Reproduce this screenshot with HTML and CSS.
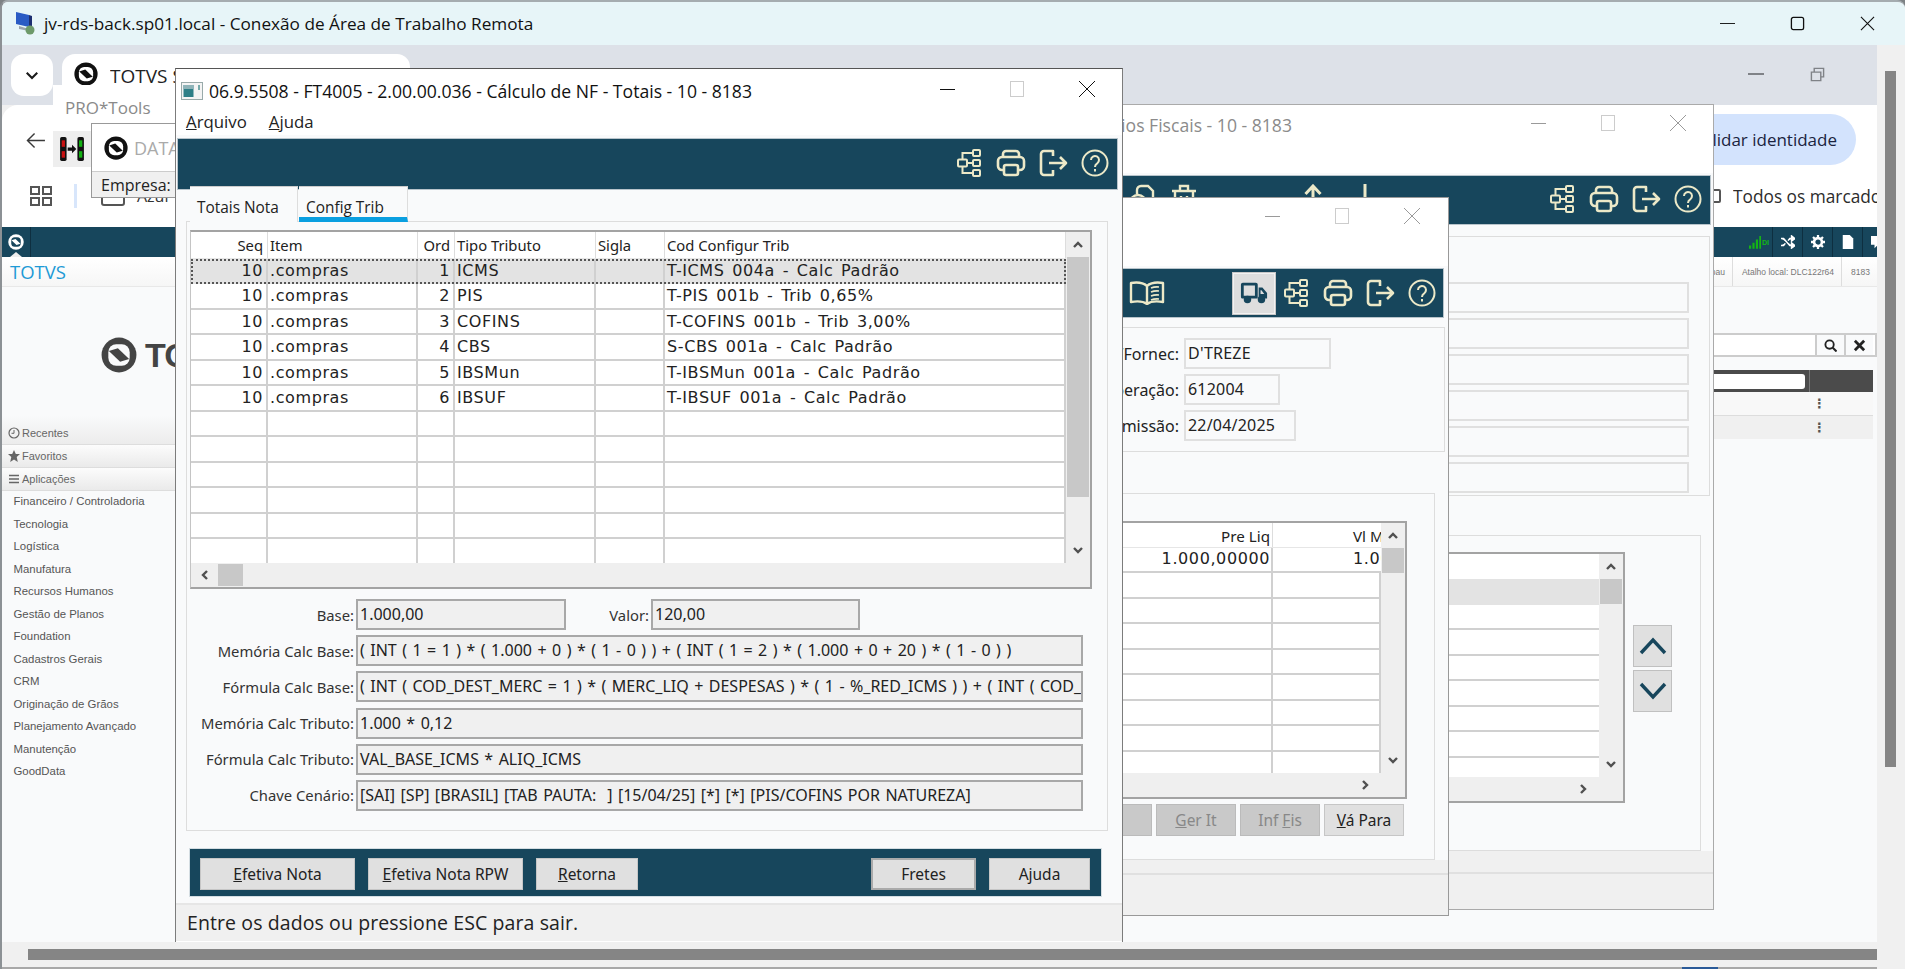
FILE: index.html
```html
<!DOCTYPE html>
<html lang="pt-BR">
<head>
<meta charset="utf-8">
<title>jv-rds-back.sp01.local - Conexão de Área de Trabalho Remota</title>
<link rel="stylesheet" href="styles.css">
</head>
<body>
<svg class="defs" width="0" height="0" aria-hidden="true">
  <symbol id="i-hier" viewBox="0 0 24 28"><g fill="none" stroke="currentColor" stroke-width="2"><rect x="1" y="10.500" width="9" height="7" rx="1"/><rect x="16" y="1" width="7" height="6" rx="1"/><rect x="16" y="11" width="7" height="6" rx="1"/><rect x="16" y="21" width="7" height="6" rx="1"/><path d="M10 14H16M5.500 10.500V4H16M5.500 17.500V24H16"/></g></symbol>
  <symbol id="i-print" viewBox="0 0 30 28"><g fill="none" stroke="currentColor" stroke-width="2.600"><path d="M7 8V5a3 3 0 0 1 3-3H20a3 3 0 0 1 3 3V8"/><path d="M8 21H6a4 4 0 0 1-4-4V12a4 4 0 0 1 4-4H24a4 4 0 0 1 4 4V17a4 4 0 0 1-4 4H22"/><rect x="8" y="16" width="14" height="10" rx="2"/></g></symbol>
  <symbol id="i-exit" viewBox="0 0 30 28"><g fill="none" stroke="currentColor" stroke-width="2.600" stroke-linejoin="round"><path d="M14 7V2H5a3 3 0 0 0-3 3V23a3 3 0 0 0 3 3H14V21"/><path d="M10 14H27M21 8l6 6-6 6"/></g></symbol>
  <symbol id="i-help" viewBox="0 0 28 28"><g fill="none" stroke="currentColor" stroke-width="2"><circle cx="14" cy="14" r="12.500"/><path d="M10 11a4 4 0 1 1 6.200 3.300c-1.600 1-2.200 1.700-2.200 3.700"/><path d="M14 20v2.500"/></g></symbol>
  <symbol id="i-truck" viewBox="0 0 30 24"><g fill="currentColor"><path d="M3 1H17a2 2 0 0 1 2 2V18H2a2 2 0 0 1-1-2V3a2 2 0 0 1 2-2Z M4 4V15H16V4Z" fill-rule="evenodd"/><path d="M20 6h4l5 6v6H20Z M22 9v4h4l-3-4Z" fill-rule="evenodd"/><circle cx="8" cy="19" r="4"/><circle cx="23" cy="19" r="4"/></g></symbol>
  <symbol id="i-book" viewBox="0 0 36 24"><g fill="none" stroke="currentColor" stroke-width="2.400" stroke-linejoin="round"><path d="M18 5C14 1.500 8 1 2 2V21c6-1 12-1 16 2 4-3 10-3 16-2V2C28 1 22 1.500 18 5ZM18 5V23"/><path stroke-width="1.600" d="M22 7c2.500-1 5-1.300 8-1M22 11c2.500-1 5-1.300 8-1M22 15c2.500-1 5-1.300 8-1M22 19c2.500-1 5-1.300 8-1"/></g></symbol>
  <symbol id="i-copy" viewBox="0 0 26 28"><g fill="none" stroke="currentColor" stroke-width="2.400"><circle cx="9" cy="19" r="8"/><path d="M8 10V6a4 4 0 0 1 4-4h7l5 5v10a3 3 0 0 1-3 3h-4"/></g></symbol>
  <symbol id="i-trash" viewBox="0 0 26 28"><g fill="none" stroke="currentColor" stroke-width="2.400"><path d="M1 7H25M9 6V2H17V6M4 8V25a2 2 0 0 0 2 2H20a2 2 0 0 0 2-2V8M10 12V22M16 12V22"/></g></symbol>
  <symbol id="i-logo" viewBox="0 0 32 32"><circle cx="16" cy="16" r="15.500" fill="currentColor"/><rect x="6.500" y="6.500" width="19" height="19" rx="7" fill="var(--logo-hole,#fff)"/><path d="M7 12.500L15 10 25 19.500 17 22Z" fill="currentColor"/></symbol>
  <symbol id="i-chev" viewBox="0 0 12 12"><path d="M2 8L6 4l4 4" fill="none" stroke="currentColor" stroke-width="2.400"/></symbol>
</svg>

<div class="desktop">
  <div class="frame">
    <header class="rdp-title">
      <svg class="rdp-icon" viewBox="0 0 22 24"><path d="M2 1l13 3v12L2 13Z" fill="#2a5bc4"/><path d="M15 4l3 1v11l-3 1Z" fill="#1c2e70"/><path d="M5 15l10 3v2L5 18Z" fill="#9aa3ad"/><circle cx="16" cy="19" r="4.500" fill="#6d9a6a"/></svg>
      <span class="rdp-text">jv-rds-back.sp01.local - Conexão de Área de Trabalho Remota</span>
      <div class="rdp-controls">
        <svg viewBox="0 0 16 16"><path d="M0 8H16" stroke="#111" stroke-width="1"/></svg>
        <svg viewBox="0 0 16 16"><rect x="1.500" y="1.500" width="13" height="13" rx="2" fill="none" stroke="#111" stroke-width="1.400"/></svg>
        <svg viewBox="0 0 16 16"><path d="M1 1L15 15M15 1L1 15" stroke="#111" stroke-width="1.200"/></svg>
      </div>
    </header>

    <div class="tabstrip">
      <div class="dropdown"><svg viewBox="0 0 12 12"><path d="M1.500 4L6 8.500 10.500 4" fill="none" stroke="#1a1a1a" stroke-width="1.800"/></svg></div>
      <div class="browser-tab">
        <svg class="tab-logo"><use href="#i-logo"/></svg>
        <span>TOTVS Smartclient</span>
      </div>
      <div class="strip-controls">
        <span class="strip-min"></span>
        <svg viewBox="0 0 16 16"><path d="M1.500 5.500h10v9h-10ZM4.500 5V1.500h10v9H12" fill="none" stroke="#7f8287" stroke-width="1.500"/></svg>
      </div>
    </div>

    <main class="page">
      <div class="tool-a">
        <svg class="back-arrow" viewBox="0 0 20 18"><path d="M20 9H2M9 1.500L1.500 9 9 16.500" fill="none" stroke="#3a3a3a" stroke-width="1.500"/></svg>
        <div class="pill">Validar identidade</div>
      </div>
      <div class="tool-b">
        <svg class="apps" viewBox="0 0 22 20"><path d="M1 1h8v7H1ZM13 1h8v7h-8ZM1 12h8v7H1ZM13 12h8v7h-8Z" fill="none" stroke="#555" stroke-width="2"/></svg>
        <span class="vbar"></span>
        <span class="azul-box"></span>
        <span class="azul">Azul</span>
        <span class="checkbox"></span>
        <span class="todos">Todos os marcados</span>
      </div>
      <div class="teal-bar">
        <div class="teal-logo">
          <svg><use href="#i-logo"/></svg>
          <span class="notch"></span>
        </div>
        <div class="teal-right">
          <div class="t-cell signal">
            <svg viewBox="0 0 14 16"><path d="M0 12h2.500v4H0ZM4 9h2.500v7H4ZM8 5h2.500v11H8ZM12 1h2v15h-2Z" fill="#14b514"/></svg>
            <span>DI</span>
          </div>
          <div class="t-cell"><svg viewBox="0 0 16 14"><path d="M0 3h3l7 8h3M0 11h3l2-2.500M8 5.500L10 3h3M12 0l4 3-4 3ZM12 8l4 3-4 3Z" fill="#fff" stroke="#fff" stroke-width="1.600"/></svg></div>
          <div class="t-cell"><svg viewBox="0 0 16 16"><circle cx="8" cy="8" r="4.500" fill="none" stroke="#fff" stroke-width="3"/><path d="M8 0v3M8 13v3M0 8h3M13 8h3M2.300 2.300l2 2M11.700 11.700l2 2M2.300 13.700l2-2M11.700 4.300l2-2" stroke="#fff" stroke-width="2.600"/></svg></div>
          <div class="t-cell"><svg viewBox="0 0 14 16"><path d="M1 0h8l4 4v12H1Z" fill="#fff"/></svg></div>
          <div class="t-cell t-last"><svg viewBox="0 0 16 16"><path d="M0 1h16v10H8l-4 4v-4H0Z" fill="#fff"/></svg></div>
        </div>
      </div>
      <div class="crumb">
        <span class="crumb-title">TOTVS</span>
        <div class="crumb-right">
          <span class="c-item c-narrow">Matão - Itambau</span>
          <span class="c-item">Atalho local: DLC122r64</span>
          <span class="c-item">8183</span>
        </div>
      </div>
      <div class="content">
        <aside class="sidebar">
          <div class="brand">
            <svg><use href="#i-logo"/></svg>
            <span>TOTVS</span>
          </div>
          <div class="acc acc-first">
            <svg viewBox="0 0 12 12"><circle cx="6" cy="6" r="5" fill="none" stroke="#666" stroke-width="1.200"/><path d="M6 3v3.300H3.500" fill="none" stroke="#666"/></svg>
            <span>Recentes</span>
          </div>
          <div class="acc">
            <svg viewBox="0 0 12 12"><path d="M6 0l1.800 4H12L8.700 7l1.100 5L6 9.400 2.200 12l1.100-5L0 4h4.200Z" fill="#666"/></svg>
            <span>Favoritos</span>
          </div>
          <div class="acc">
            <svg viewBox="0 0 12 12"><path d="M1 2.500h10M1 6h10M1 9.500h10" stroke="#666" stroke-width="1.400"/></svg>
            <span>Aplicações</span>
          </div>
          <nav class="menu">
            <a>Financeiro / Controladoria</a>
            <a>Tecnologia</a>
            <a>Logística</a>
            <a>Manufatura</a>
            <a>Recursos Humanos</a>
            <a>Gestão de Planos</a>
            <a>Foundation</a>
            <a>Cadastros Gerais</a>
            <a>CRM</a>
            <a>Originação de Grãos</a>
            <a>Planejamento Avançado</a>
            <a>Manutenção</a>
            <a>GoodData</a>
          </nav>
        </aside>
        <section class="rightpane">
          <div class="searchbox">
            <div class="s-input"></div>
            <button class="s-btn"><svg viewBox="0 0 14 14"><circle cx="6" cy="6" r="4.500" fill="none" stroke="#222" stroke-width="2"/><path d="M9.500 9.500L13.500 13.500" stroke="#222" stroke-width="2.200"/></svg></button>
            <button class="s-btn"><svg viewBox="0 0 14 14"><path d="M2 2L12 12M12 2L2 12" stroke="#222" stroke-width="3"/></svg></button>
          </div>
          <div class="dark-head"><span class="d-pill"></span><span class="d-rest"></span></div>
          <div class="lst lst-a"><span class="kebab">⋮</span></div>
          <div class="lst lst-b"><span class="kebab">⋮</span></div>
        </section>
      </div>
    </main>

    <div class="v-scroll"><div class="v-thumb"></div></div>
    <div class="h-scroll"><div class="h-thumb"></div></div>
    <div class="frame-bottom"><span></span></div>
  </div>

  <!-- Janelas flutuantes da aplicação -->
  <div class="protools">PRO*Tools</div>

  <div class="datawin">
    <div class="dw-head">
      <svg class="dw-logo"><use href="#i-logo"/></svg>
      <span>DATASUL</span>
    </div>
    <div class="dw-row">Empresa:</div>
  </div>
  <div class="flag-icon">
    <svg viewBox="0 0 24 24">
      <rect x="1" y="1" width="6" height="22" rx="1.500" fill="#111"/><rect x="2.500" y="4" width="3" height="6" fill="#c91212"/><rect x="2.500" y="14" width="3" height="6" fill="#c91212"/>
      <rect x="17" y="1" width="6" height="22" rx="1.500" fill="#111"/><rect x="18.500" y="4" width="3" height="6" fill="#12b212"/><rect x="18.500" y="14" width="3" height="6" fill="#12b212"/>
      <path d="M8 10.500h4V8l4 4-4 4v-2.500H8Z" fill="#111"/>
    </svg>
  </div>

  <!-- Janela de trás -->
  <div class="win win-back">
    <div class="w-title w-title-back">
      <span class="w-text w-text-back">Benefícios Fiscais - 10 - 8183</span>
      <div class="w-controls controls-back">
        <i class="c-min"></i><i class="c-box"></i><svg viewBox="0 0 16 16"><path d="M0 0L16 16M16 0L0 16" stroke="currentColor" stroke-width="1"/></svg>
      </div>
    </div>
    <div class="toolbar back-toolbar">
      <svg class="ti ti-copy"><use href="#i-copy"/></svg>
      <svg class="ti ti-trash"><use href="#i-trash"/></svg>
      <svg class="ti-arrow ti-up" viewBox="0 0 18 26"><path d="M9 26V3M1.500 10L9 2l7.500 8" fill="none" stroke="currentColor" stroke-width="3"/></svg>
      <svg class="ti-arrow ti-down" viewBox="0 0 18 26"><path d="M9 0V23M1.500 16L9 24l7.500-8" fill="none" stroke="currentColor" stroke-width="3"/></svg>
      <span class="spacer"></span>
      <svg class="ti ti-h"><use href="#i-hier"/></svg>
      <svg class="ti ti-p"><use href="#i-print"/></svg>
      <svg class="ti ti-e"><use href="#i-exit"/></svg>
      <svg class="ti ti-q"><use href="#i-help"/></svg>
    </div>
    <div class="back-panel">
      <div class="blank-field"></div><div class="blank-field"></div><div class="blank-field"></div>
      <div class="blank-field"></div><div class="blank-field"></div><div class="blank-field"></div>
    </div>
    <div class="back-panel2">
      <div class="grid back-grid">
        <div class="g-main">
          <div class="g-rows">
            <div class="g-head g-plain"></div>
            <div class="g-row g-one g-sel-flat"></div>
            <div class="g-row g-one"></div><div class="g-row g-one"></div><div class="g-row g-one"></div>
            <div class="g-row g-one"></div><div class="g-row g-one"></div><div class="g-row g-one"></div><div class="g-row g-one"></div><div class="g-row g-one"></div>
          </div>
          <div class="g-v">
            <svg class="chev"><use href="#i-chev"/></svg>
            <div class="g-vthumb thumb-25"></div>
            <span class="spacer"></span>
            <svg class="chev chev-down"><use href="#i-chev"/></svg>
          </div>
        </div>
        <div class="g-h g-h-end"><svg class="chev chev-right"><use href="#i-chev"/></svg></div>
      </div>
      <div class="updown">
        <button class="ud-btn"><svg viewBox="0 0 28 18"><path d="M2 16L14 3l12 13" fill="none" stroke="#17465c" stroke-width="3.400"/></svg></button>
        <button class="ud-btn"><svg viewBox="0 0 28 18"><path d="M2 2l12 13L26 2" fill="none" stroke="#17465c" stroke-width="3.400"/></svg></button>
      </div>
    </div>
    <div class="st-band band-back"></div>
    <div class="st-foot foot-back"></div>
  </div>

  <!-- Janela do meio -->
  <div class="win win-mid">
    <div class="w-title w-title-mid">
      <div class="w-controls controls-back">
        <i class="c-min"></i><i class="c-box"></i><svg viewBox="0 0 16 16"><path d="M0 0L16 16M16 0L0 16" stroke="currentColor" stroke-width="1"/></svg>
      </div>
    </div>
    <div class="toolbar mid-toolbar">
      <svg class="ti ti-book"><use href="#i-book"/></svg>
      <span class="spacer"></span>
      <div class="truck-btn"><svg><use href="#i-truck"/></svg></div>
      <svg class="ti ti-h ti-h-mid"><use href="#i-hier"/></svg>
      <svg class="ti ti-p"><use href="#i-print"/></svg>
      <svg class="ti ti-e"><use href="#i-exit"/></svg>
      <svg class="ti ti-q"><use href="#i-help"/></svg>
    </div>
    <div class="mid-panel">
      <div class="mf"><label>Nome/Fornec:</label><span class="mf-val mf-a">D'TREZE</span></div>
      <div class="mf"><label>Operação:</label><span class="mf-val mf-b">612004</span></div>
      <div class="mf"><label>Emissão:</label><span class="mf-val mf-c">22/04/2025</span></div>
    </div>
    <div class="mid-panel2">
      <div class="grid mid-grid">
        <div class="g-main">
          <div class="g-rows">
            <div class="g-head mid-cols"><span class="c-r">Pre Liq</span><span class="c-clip">Vl Merc</span></div>
            <div class="g-row mid-cols"><span class="c-r data">1.000,00000</span><span class="c-clip data">1.000,00</span></div>
            <div class="g-row mid-cols"><span></span><span></span></div><div class="g-row mid-cols"><span></span><span></span></div>
            <div class="g-row mid-cols"><span></span><span></span></div><div class="g-row mid-cols"><span></span><span></span></div>
            <div class="g-row mid-cols"><span></span><span></span></div><div class="g-row mid-cols"><span></span><span></span></div>
            <div class="g-row mid-cols"><span></span><span></span></div><div class="g-row mid-cols"><span></span><span></span></div>
          </div>
          <div class="g-v">
            <svg class="chev"><use href="#i-chev"/></svg>
            <div class="g-vthumb thumb-25"></div>
            <span class="spacer"></span>
            <svg class="chev chev-down"><use href="#i-chev"/></svg>
          </div>
        </div>
        <div class="g-h g-h-end mid-h"><svg class="chev chev-right"><use href="#i-chev"/></svg></div>
      </div>
      <div class="mid-btns">
        <button class="dlg-btn off btn-left">Filtrar</button>
        <button class="dlg-btn off"><u>G</u>er It</button>
        <button class="dlg-btn off">Inf <u>F</u>is</button>
        <button class="dlg-btn"><u>V</u>á Para</button>
      </div>
    </div>
    <div class="st-band band-mid"></div>
    <div class="st-foot foot-mid"></div>
  </div>

  <!-- Janela principal -->
  <div class="win win-main">
    <div class="w-title w-title-main">
      <svg class="win-ico" viewBox="0 0 22 18"><rect x=".5" y=".5" width="21" height="17" fill="#f4f4f4" stroke="#9aa"/><rect x="2.500" y="3" width="10" height="12" fill="#2e7f87"/><rect x="2.500" y="3" width="10" height="4" fill="#8fb3b8"/><rect x="17" y="3" width="2" height="5" fill="#7aa"/></svg>
      <span class="w-text">06.9.5508 - FT4005 - 2.00.00.036 - Cálculo de NF - Totais - 10 - 8183</span>
      <div class="w-controls controls-main">
        <i class="c-min"></i><i class="c-box"></i><svg viewBox="0 0 16 16"><path d="M0 0L16 16M16 0L0 16" stroke="currentColor" stroke-width="1"/></svg>
      </div>
    </div>
    <div class="menubar"><span><u>A</u>rquivo</span><span><u>A</u>juda</span></div>
    <div class="toolbar main-toolbar">
      <span class="spacer"></span>
      <svg class="ti ti-h"><use href="#i-hier"/></svg>
      <svg class="ti ti-p"><use href="#i-print"/></svg>
      <svg class="ti ti-e"><use href="#i-exit"/></svg>
      <svg class="ti ti-q"><use href="#i-help"/></svg>
    </div>
    <div class="tabs">
      <div class="tab">Totais Nota</div>
      <div class="tab tab-on">Config Trib</div>
    </div>
    <div class="tabpanel">
      <div class="grid main-grid">
        <div class="g-main">
          <div class="g-rows">
            <div class="g-head main-cols"><span class="c-r">Seq</span><span>Item</span><span class="c-r">Ord</span><span>Tipo Tributo</span><span>Sigla</span><span>Cod Configur Trib</span></div>
            <div class="g-row main-cols g-sel data"><span class="c-r">10</span><span>.compras</span><span class="c-r">1</span><span>ICMS</span><span></span><span>T-ICMS 004a - Calc Padrão</span></div>
            <div class="g-row main-cols data"><span class="c-r">10</span><span>.compras</span><span class="c-r">2</span><span>PIS</span><span></span><span>T-PIS 001b - Trib 0,65%</span></div>
            <div class="g-row main-cols data"><span class="c-r">10</span><span>.compras</span><span class="c-r">3</span><span>COFINS</span><span></span><span>T-COFINS 001b - Trib 3,00%</span></div>
            <div class="g-row main-cols data"><span class="c-r">10</span><span>.compras</span><span class="c-r">4</span><span>CBS</span><span></span><span>S-CBS 001a - Calc Padrão</span></div>
            <div class="g-row main-cols data"><span class="c-r">10</span><span>.compras</span><span class="c-r">5</span><span>IBSMun</span><span></span><span>T-IBSMun 001a - Calc Padrão</span></div>
            <div class="g-row main-cols data"><span class="c-r">10</span><span>.compras</span><span class="c-r">6</span><span>IBSUF</span><span></span><span>T-IBSUF 001a - Calc Padrão</span></div>
            <div class="g-row main-cols"><span></span><span></span><span></span><span></span><span></span><span></span></div>
            <div class="g-row main-cols"><span></span><span></span><span></span><span></span><span></span><span></span></div>
            <div class="g-row main-cols"><span></span><span></span><span></span><span></span><span></span><span></span></div>
            <div class="g-row main-cols"><span></span><span></span><span></span><span></span><span></span><span></span></div>
            <div class="g-row main-cols"><span></span><span></span><span></span><span></span><span></span><span></span></div>
            <div class="g-row main-cols"><span></span><span></span><span></span><span></span><span></span><span></span></div>
          </div>
          <div class="g-v">
            <svg class="chev"><use href="#i-chev"/></svg>
            <div class="g-vthumb main-thumb"></div>
            <span class="spacer"></span>
            <svg class="chev chev-down"><use href="#i-chev"/></svg>
          </div>
        </div>
        <div class="g-h">
          <svg class="chev chev-left"><use href="#i-chev"/></svg>
          <div class="g-hthumb"></div>
        </div>
      </div>
      <div class="form">
        <label>Base:</label>
        <div class="form-pair">
          <span class="fv fv-base">1.000,00</span>
          <label class="lbl-valor">Valor:</label>
          <span class="fv fv-valor">120,00</span>
        </div>
        <label>Memória Calc Base:</label>
        <span class="fv">( INT ( 1 = 1 ) * ( 1.000 + 0 ) * ( 1 - 0 ) ) + ( INT ( 1 = 2 ) * ( 1.000 + 0 + 20 ) * ( 1 - 0 ) )</span>
        <label>Fórmula Calc Base:</label>
        <span class="fv">( INT ( COD_DEST_MERC = 1 ) * ( MERC_LIQ + DESPESAS ) * ( 1 - %_RED_ICMS ) ) + ( INT ( COD_DEST_MERC = 2 ) * ( MERC_LIQ ) )</span>
        <label>Memória Calc Tributo:</label>
        <span class="fv">1.000 * 0,12</span>
        <label>Fórmula Calc Tributo:</label>
        <span class="fv">VAL_BASE_ICMS * ALIQ_ICMS</span>
        <label>Chave Cenário:</label>
        <span class="fv">[SAI] [SP] [BRASIL] [TAB PAUTA:  ] [15/04/25] [*] [*] [PIS/COFINS POR NATUREZA]</span>
      </div>
    </div>
    <div class="footbar">
      <button class="dlg-btn w155"><u>E</u>fetiva Nota</button>
      <button class="dlg-btn w155"><u>E</u>fetiva Nota RPW</button>
      <button class="dlg-btn w102"><u>R</u>etorna</button>
      <span class="spacer"></span>
      <button class="dlg-btn w105 def">Fretes</button>
      <button class="dlg-btn w101">Ajuda</button>
    </div>
    <div class="statusbar">Entre os dados ou pressione ESC para sair.</div>
  </div>
</div>
</body>
</html>
```

FILE: styles.css
```css
*{box-sizing:border-box}
html,body{margin:0;padding:0;background:#7d8285}
body{width:1905px;height:969px;overflow:hidden;font-family:"Noto Sans","Open Sans",sans-serif}
.defs{position:absolute}
button{font:inherit;margin:0;padding:0}
.spacer{flex:1}
.desktop{position:relative;width:1905px;height:969px;overflow:hidden}

/* moldura externa */
.frame{display:grid;width:1905px;height:969px;grid-template-columns:1875px 28px;grid-template-rows:43px 60px 837px 25px 2px;
  margin:0;border-top:2px solid #a5acb0;border-left:2px solid #8c9195;border-radius:8px 8px 0 0;overflow:hidden;background:#f0f0f0}
.rdp-title{grid-column:1/3;display:flex;align-items:center;background:#e7f5f8;padding-left:12px}
.rdp-icon{width:22px;height:24px;margin-top:-1px}
.rdp-text{margin-left:8px;font:17.200px "Open Sans",sans-serif;color:#111;white-space:nowrap}
.rdp-controls{margin-left:auto;display:flex;gap:55px;padding-right:30px;align-items:center}
.rdp-controls svg{width:15px;height:15px}
.tabstrip{display:flex;background:#dde1e8;position:relative;padding:9px 0 0 9px}
.dropdown{width:42px;height:42px;background:#fff;border-radius:13px;display:flex;align-items:center;justify-content:center}
.dropdown svg{width:14px;height:14px}
.browser-tab{margin-left:9px;width:348px;height:60px;background:#fff;border-radius:13px 13px 0 0;display:flex;align-items:flex-start;padding:8px 0 0 12px;color:#222;font:19px "Open Sans",sans-serif}
.browser-tab span{margin:1px 0 0 12px;white-space:nowrap;overflow:hidden}
.tab-logo{width:24px;height:24px;color:#111;flex:none}
.strip-controls{margin-left:auto;display:flex;align-items:center;gap:46px;height:40px;padding-right:52px}
.strip-min{display:block;width:16px;height:2px;background:#7f8287}
.strip-controls svg{width:15px;height:15px}

.page{grid-row:3;grid-column:1;background:#fff;display:flex;flex-direction:column;overflow:hidden;border-radius:16px 0 0 0;width:1875px}
.tool-a{height:70px;display:flex;align-items:flex-start;padding:9px 21px 0 24px}
.back-arrow{width:19px;height:17px;margin-top:18px}
.pill{margin-left:auto;width:260px;height:51px;background:#d3e3fd;border-radius:26px;font:17px "Open Sans",sans-serif;color:#1a2340;display:flex;align-items:center;justify-content:flex-end;padding-right:19px;white-space:nowrap}
.tool-b{height:52px;display:flex;align-items:center;padding:0 0 10px 28px;overflow:hidden}
.apps{width:22px;height:20px}
.vbar{width:3px;height:24px;background:#d8e6fb;margin-left:22px}
.azul-box{width:24px;height:20px;border:2px solid #555;border-radius:3px;margin-left:24px}
.azul{margin-left:12px;font:16px "Open Sans",sans-serif;color:#333}
.checkbox{margin-left:auto;width:14px;height:14px;border:2px solid #555;border-radius:2px}
.todos{margin:0 0 0 12px;width:144px;flex:none;overflow:hidden;font:17.300px "Open Sans",sans-serif;color:#2c2c2c;white-space:nowrap}
.teal-bar{height:30px;background:#17465c;display:flex;flex:none}
.teal-logo{width:29px;border-right:1px solid #0e2f40;position:relative;display:flex;justify-content:center;padding-top:7px;--logo-hole:#17465c}
.teal-logo svg{width:16px;height:16px;color:#fff}
.notch{position:absolute;left:8px;bottom:0;border:6px solid transparent;border-top:0;border-bottom:5px solid #eee}
.teal-right{margin-left:auto;display:flex;height:30px}
.t-cell{width:30px;border-left:1px solid #0e2f40;display:flex;align-items:center;justify-content:center}
.t-cell svg{width:14px;height:14px}
.t-last{justify-content:flex-start;padding-left:8px;width:15px;overflow:hidden}
.t-last svg{flex:none}
.signal{width:26px;border:0;gap:1px;margin-right:0}
.signal svg{width:12px;height:14px}
.signal span{font:bold 7px "Liberation Sans",sans-serif;color:#14b514}
.crumb{height:30px;flex:none;display:flex;align-items:center;background:linear-gradient(#fff,#f6f6f6);border-bottom:1px solid #e8e8e8}
.crumb-title{margin-left:8px;font:18.500px "Open Sans",sans-serif;color:#1e9ad6}
.crumb-right{margin-left:auto;display:flex;height:100%;align-items:center;font:8.500px "Liberation Sans",sans-serif;color:#777}
.c-item{display:flex;align-items:center;height:100%;padding:0 7px 0 9px;border-left:1px solid #ddd;white-space:nowrap}
.c-narrow{border:0;padding:0 7px 0 0}
.content{flex:1;display:flex;background:#f9fafb;justify-content:space-between}
.sidebar{width:173px;display:flex;flex-direction:column;font-family:"Liberation Sans",sans-serif;overflow:hidden}
.brand{height:128px;display:flex;align-items:center;padding:8px 0 0 99px;color:#444;flex:none}
.brand svg{width:36px;height:36px;color:#444;flex:none;--logo-hole:#f9fafb}
.brand span{margin-left:8px;font:bold 34px "Liberation Sans",sans-serif;letter-spacing:-1px;color:#444}
.acc{height:23px;display:flex;align-items:center;padding-left:6px;background:linear-gradient(#fcfcfc,#eaeaea);border-bottom:1px solid #ddd;font-size:11px;color:#666;gap:2px}
.acc-first{height:30px;padding-top:6px;background:linear-gradient(#f9fafb,#ececec)}
.acc svg{width:12px;height:12px;flex:none}
.menu{display:flex;flex-direction:column;margin-top:-1px}
.menu a{height:22.5px;display:flex;align-items:center;padding-left:11.500px;font-size:11.400px;color:#555;white-space:nowrap}
.rightpane{width:163px;padding-top:46px;display:flex;flex-direction:column}
.searchbox{height:24px;display:flex;border:2px solid #ccc;background:#fff;margin-bottom:13px;border-left:0}
.s-input{width:101px}
.s-btn{width:29px;border:0;border-left:2px solid #ccc;background:#f9fafb;display:flex;align-items:center;justify-content:center}
.s-btn svg{width:13px;height:13px}
.dark-head{height:22px;width:159px;background:#4b4b4b;display:flex;align-items:center}
.d-pill{width:91px;height:15px;background:#fff;border-radius:0 3px 3px 0}
.d-rest{margin-left:4px;height:100%;border-left:1px solid #777}
.lst{height:24px;width:159px;display:flex;align-items:center;border-bottom:1px solid #ddd;background:#f8f8f8}
.lst-b{background:#f0f0f0;height:23px;border:0}
.kebab{margin-left:99px;font:bold 13px "DejaVu Sans",sans-serif;color:#555}
.v-scroll{grid-column:2;grid-row:2/6;background:#f0f0f0;padding:26px 9px 0 8px;border-left:0}
.v-thumb{width:11px;height:696px;background:#858585}
.h-scroll{grid-column:1;grid-row:4;background:#f0f0f0;padding:7px 0 0 26px}
.h-thumb{height:11px;background:#858585}
.frame-bottom{grid-column:1;grid-row:5;background:#a8a8a8;position:relative}
.frame-bottom span{display:block;margin-left:1680px;width:36px;height:2px;background:#2a5a98}

/* janelas sobre a página */
.protools{position:absolute;left:53px;top:85px;width:130px;height:46px;background:#fff;padding:11px 0 0 12px;font:17px "Open Sans",sans-serif;color:#8a8a8a}
.flag-icon{position:absolute;left:53px;top:131px;width:38px;height:36px;background:#eee;display:flex;align-items:center;justify-content:center}
.flag-icon svg{width:26px;height:26px}
.datawin{position:absolute;left:91px;top:123px;width:90px;height:75px;background:#fff;border:1px solid #999;display:flex;flex-direction:column;overflow:hidden}
.dw-head{height:47px;display:flex;align-items:center;padding-left:12px;color:#aaa;font:18px "Open Sans",sans-serif;white-space:nowrap}
.dw-logo{width:24px;height:24px;color:#111;margin-right:6px;flex:none}
.dw-row{flex:1;background:#f0f0f0;border-top:1px solid #ccc;padding:2px 0 0 9px;font:16px "Open Sans",sans-serif;color:#222}

.win{position:absolute;background:#f9fafb;display:flex;flex-direction:column;border:1px solid #7c7c7c}
.win-main{left:175px;top:68px;width:948px;height:874px;border-bottom:0;border-top-color:#555}
.win-back{left:1000px;top:104px;width:714px;height:806px;border-left:0;border-color:#aaa}
.win-mid{left:1000px;top:197px;width:449px;height:719px;border-left:0;border-color:#999}
.w-title{display:flex;align-items:center;background:#fff;flex:none}
.w-title-main{height:44px;padding-left:5px}
.w-title-back{height:68px;align-items:flex-start;padding-top:8px}
.w-title-mid{height:68px;align-items:flex-start;padding-top:10px}
.w-text{margin-left:6px;font:17.600px "Open Sans",sans-serif;color:#111;white-space:nowrap}
.w-text-back{margin-left:auto;margin-right:0;color:#8b8b8b;position:relative;padding-top:0}
.win-ico{width:22px;height:18px;flex:none}
.w-controls{display:flex;align-items:center;gap:55px;color:#111}
.w-controls svg{width:16px;height:16px}
.c-min{display:block;width:15px;height:1px;background:currentColor}
.c-box{display:block;width:14px;height:16px;border:1px solid #ccc}
.controls-main{margin-left:auto;padding-right:27px;margin-top:-4px}
.controls-back{margin-left:auto;color:#9a9a9a;padding-right:28px}
.w-title-back .controls-back{margin-left:239px;padding-right:27px;padding-top:2px}
.menubar{height:22px;flex:none;background:#fff;display:flex;gap:22px;padding-left:10px;font:16.800px "Open Sans",sans-serif;color:#222;line-height:18px;border-bottom:0}
.toolbar{height:52px;flex:none;background:#17465c;display:flex;align-items:center;color:#ece9c8;border:1px solid #b8c4cb}
.main-toolbar{margin:3px 4px 0 1px;padding:0 8px 2px 0}
.back-toolbar{margin:2px 2px 0 0;height:50px}
.mid-toolbar{height:50px;margin:2px 4px 0 0}
.ti{flex:none;height:28px}
.ti-h{width:24px}
.ti-p{width:30px;margin-left:15px}
.ti-e{width:30px;margin-left:13px}
.ti-q{width:28px;margin-left:12px}
.back-toolbar{padding-right:8px;align-items:flex-start}
.back-toolbar .ti-h,.back-toolbar .ti-p,.back-toolbar .ti-e,.back-toolbar .ti-q{margin-top:9px}
.ti-copy,.ti-trash{width:26px;margin-top:8px}
.ti-copy{margin-left:128px}
.ti-trash{margin-left:16px}
.ti-arrow{width:18px;height:26px;margin-top:8px}
.ti-up{margin-left:107px}
.ti-down{margin-left:34px}
.mid-toolbar{padding-right:7px}
.ti-book{width:36px;height:24px;margin-left:128px}
.truck-btn{width:42px;height:41px;background:#dedede;border:1px solid #f2f2f2;outline:1px solid #c8c8c8;display:flex;align-items:center;justify-content:center;color:#17465c}
.truck-btn svg{width:28px;height:24px}
.ti-h-mid{margin-left:9px}

.tabs{display:flex;height:36px;margin:-4px 0 0 14px;flex:none;position:relative}
.tab{width:108px;background:#f9fafb;border-top:1px solid #ccc;border-right:1px solid #ddd;font:15.400px "Open Sans",sans-serif;color:#222;padding:10px 0 0 7px;text-align:left}
.tab-on{width:109px;border-bottom:5px solid #0a9fe0;margin-left:1px;padding-left:7px}
.tabpanel{margin:-1px 14px 0 10px;height:610px;border:1px solid #ddd;flex:none;padding:8px 0 0 3px}

.grid{display:flex;flex-direction:column;background:#efefef;border:2px solid #a3a3a3;border-left:1px solid #c4c4c4}
.main-grid{width:902px;height:359px}
.g-main{flex:1;display:flex;min-height:0}
.g-rows{flex:1;background:#fff;overflow:hidden;min-width:0}
.g-head,.g-row{display:grid;font:14.800px "Noto Sans",sans-serif;color:#222}
.g-head{height:26.500px;border-bottom:1px solid #e6e6e6;white-space:nowrap}
.g-head span{padding:2px 3px 0 2px;border-right:1px solid #ddd;line-height:22px}
.g-row{height:25.5px;border-bottom:2px solid #d0d0d0}
.g-row span{border-right:2px solid #d0d0d0;padding:0 3px 0 2px;line-height:24px;white-space:nowrap;overflow:hidden}
.data,.g-row .data{font:16px "DejaVu Sans",sans-serif;color:#222;letter-spacing:.6px;word-spacing:2px}
.main-cols{grid-template-columns:77px 150px 37px 141px 69px 1fr}
.mid-cols{grid-template-columns:192px 1fr}
.c-r{text-align:right}
.g-head .c-r{padding-right:4px}
.g-sel{background:#e3e3e3;outline:2px dotted #555;outline-offset:-2px;border-bottom:0}
.g-sel-flat{background:#e3e3e3;border-bottom:0}
.g-one{grid-template-columns:1fr}
.g-plain{border:0;height:25px}
.g-v{width:24px;flex:none;display:flex;flex-direction:column;align-items:stretch;background:#efefef;padding:0 1px}
.g-vthumb{background:#c8c8c8}
.main-thumb{height:240px}
.thumb-25{height:25px}
.chev{display:block;width:12px;height:12px;color:#505050;margin:7px auto 6px;flex:none}
.chev-down{transform:rotate(180deg);margin:0 auto 7px}
.chev-left{transform:rotate(-90deg);margin:0 0 0 8px}
.chev-right{transform:rotate(90deg);margin:0 8px 0 0}
.g-h{height:24px;flex:none;display:flex;align-items:center;background:#efefef}
.g-hthumb{width:25px;height:22px;background:#c8c8c8;margin-left:7px}
.g-h-end{justify-content:flex-end;padding-right:26px}

.form{display:grid;grid-template-columns:164px 727px;column-gap:2px;row-gap:5.2px;margin:10px 0 0 0;font:14.800px "Noto Sans",sans-serif;color:#333;grid-auto-rows:31px}
.form label{display:flex;align-items:center;justify-content:flex-end;white-space:nowrap}
.form-pair{display:flex}
.fv{display:block;background:#f0f0f0;border:2px solid #a8a8a8;padding:0 2px 0 2px;line-height:26px;white-space:pre;overflow:hidden;color:#222;font-size:16px;word-spacing:1.300px}
.fv-base{width:210px}
.lbl-valor{width:83px}
.fv-valor{width:209px;margin-left:2px}
.footbar{margin:17px 20px 0 13px;height:49px;flex:none;background:#17465c;display:flex;align-items:center;padding:3px 11px 0 10px;gap:13px;border:1px solid #d4dde2}
.dlg-btn{height:32px;background:#e0e0e0;border:1px solid #c6c6c6;outline:0;font:15.500px "Noto Sans",sans-serif;color:#222;white-space:nowrap}
.dlg-btn.def{border:2px solid #aaa}
.w155{width:155px}
.w102{width:102px}
.w105{width:105px}
.w101{width:101px}
.statusbar{margin-top:6px;flex:1;background:#f0f0f0;border-top:2px solid #e6e6e6;border-bottom:1px solid #fff;padding:4px 0 0 11px;font:19.500px "Open Sans",sans-serif;color:#222;letter-spacing:.1px;white-space:nowrap}

/* janela de trás: detalhes */
.back-panel{margin:11px 3px 0 60px;height:260px;border:1px solid #ddd;padding:45px 20px 0 60px;flex:none;display:flex;flex-direction:column;gap:5px}
.blank-field{height:31px;border:2px solid #e0e0e0;background:#f9fafb}
.back-panel2{margin:39px 12px 0 60px;height:316px;border:1px solid #ddd;border-left:0;flex:none;padding:16px 28px 0 60px;display:flex;gap:8px}
.back-grid{flex:1;height:251px;border-top:2px solid #a3a3a3;border-right:2px solid #a3a3a3;border-bottom:2px solid #a3a3a3;min-width:0}
.updown{margin-top:73px;display:flex;flex-direction:column;gap:3px;flex:none}
.ud-btn{width:39px;height:42px;background:#e0e0e0;border:1px solid #c0c0c0;display:flex;align-items:center;justify-content:center}
.ud-btn svg{width:28px;height:18px}
.st-band{height:21px;background:#f0f0f0;flex:none}
.st-foot{flex:1;background:#f0f0f0;border-top:2px solid #e0e0e0}
.band-back{height:21px}

/* janela do meio: detalhes */
.mid-panel{margin:9px 3px 0 40px;height:125px;border:1px solid #ddd;flex:none;display:flex;flex-direction:column;gap:5px;padding:10px 0 0 0}
.mf{display:flex;height:31px;align-items:center;font:16px "Noto Sans",sans-serif;color:#222}
.mf label{width:138px;text-align:right;white-space:nowrap;margin-right:5px}
.mf-val{height:31px;background:#f9fafb;border:2px solid #e0e0e0;padding-left:2px;line-height:27px;white-space:nowrap;font-size:16px;letter-spacing:.2px}
.mf-a{width:147px}
.mf-b{width:96px}
.mf-c{width:112px}
.mid-panel2{margin:41px 13px 0 60px;height:367px;border:1px solid #ddd;border-left:0;flex:none;padding:27px 0 0 20px;display:flex;flex-direction:column;align-items:stretch}
.mid-grid{height:278px;margin-right:27px;flex:none}
.mid-grid .g-head{height:24.500px;font-size:15.200px}
.mid-grid .g-head span,.mid-grid .g-row span{line-height:22px}
.mid-grid .g-head .c-r{padding-right:2px}
.mid-grid .g-row .c-r{padding-right:1px}
.c-clip{padding-left:80px!important;border-right:0!important;white-space:nowrap;overflow:hidden}
.mid-btns{display:flex;justify-content:flex-end;gap:4px;margin:5px 30px 0 0}
.mid-btns .dlg-btn{width:80px;flex:none}
.dlg-btn.off{background:#c9c9c9;color:#888;border-color:#bbb}
.mid-btns .btn-left{padding-right:26px}
.foot-mid{border-top:2px solid #e0e0e0}
.band-mid{height:13px}
```
